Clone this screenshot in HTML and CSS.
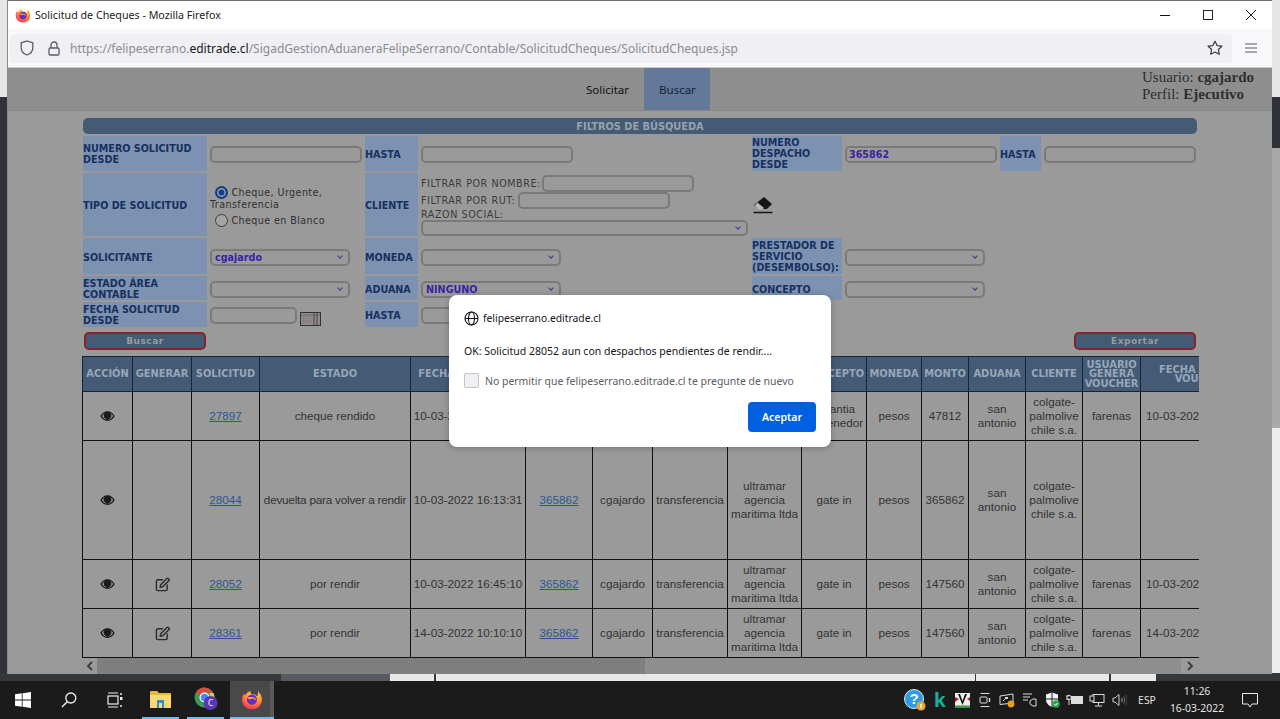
FILE: index.html
```html
<!DOCTYPE html>
<html lang="es">
<head>
  <meta charset="UTF-8">
  <title>Solicitud de Cheques - Mozilla Firefox</title>
  <link rel="stylesheet" href="styles.css">
</head>
<body>
  <svg class="defs" width="0" height="0">
    <defs>
      <radialGradient id="ffBody" cx="0.6" cy="0.25" r="0.95">
        <stop offset="0" stop-color="#ffe14d"/>
        <stop offset="0.4" stop-color="#ff9a2e"/>
        <stop offset="0.75" stop-color="#ff3f4e"/>
        <stop offset="1" stop-color="#d6177a"/>
      </radialGradient>
      <symbol id="firefox" viewBox="0 0 32 32">
        <path fill="url(#ffBody)" d="M24 2c.6 2.6 2 3.500 3.600 6 2 3 2.900 6 2.900 9.200C30.500 25 24 31 16 31S1.500 25 1.500 17c0-3.500 1-6.800 3-9.300 0 1.500.5 2.600 1.500 3.300C7.500 8 10 6 14 4.500c-.7 2 0 3.500 1.500 4.500 3.500-.2 6.300 1 8 3.500C25 9.500 25.300 6 24 2z"/>
        <circle cx="16" cy="17" r="7.500" fill="#6a2bc4"/>
        <path fill="#ff9a2e" d="M9 14c3-1.500 5-1 7-1 4 0 6.500 3 6.500 6-2-3-5-4-8-3-2 .7-4 .3-5.500-2z"/>
      </symbol>
      <symbol id="eye" viewBox="0 0 16 12">
        <path fill="#1c1c1c" d="M8 .8C4.500.8 1.800 3 .3 6c1.500 3 4.200 5.200 7.700 5.200S14.200 9 15.700 6C14.200 3 11.500.8 8 .8zm0 9.200C5.500 10 3.300 8.300 2 6c.8-1.300 1.800-2.400 3.100-3.100A4 4 0 1 0 10.900 2.900C12.200 3.600 13.200 4.700 14 6c-1.300 2.300-3.500 4-6 4z"/>
        <circle cx="8" cy="5.500" r="2.600" fill="#1c1c1c"/>
      </symbol>
      <symbol id="edit" viewBox="0 0 16 16">
        <path fill="none" stroke="#2b2b2b" stroke-width="1.500" d="M8.500 3H3a1.500 1.500 0 0 0-1.500 1.500V13A1.500 1.500 0 0 0 3 14.500h8.500A1.500 1.500 0 0 0 13 13V8"/>
        <path fill="none" stroke="#2b2b2b" stroke-width="1.500" stroke-linejoin="round" d="M5.500 11l.6-2.800L12.700 1.600a1 1 0 0 1 1.400 0l.8.8a1 1 0 0 1 0 1.400L8.300 10.400z"/>
      </symbol>
    </defs>
  </svg>

  <div class="backdrop-top"></div>
  <div class="backdrop-side"></div>
  <div class="backdrop-strip">
    <span class="strip-a"></span>
    <span class="strip-b"></span>
    <span class="strip-c"></span>
    <span class="strip-d"></span>
    <span class="strip-e"></span>
    <span class="strip-f"></span>
  </div>

  <div class="ventana">
    <div class="titulo">
      <svg class="ff-mini" width="16" height="16"><use href="#firefox"/></svg>
      <span class="titulo-txt">Solicitud de Cheques - Mozilla Firefox</span>
      <div class="ctrl">
        <svg width="12" height="12" viewBox="0 0 12 12"><path d="M1 6.500h10" stroke="#111" stroke-width="1"/></svg>
        <svg width="12" height="12" viewBox="0 0 12 12"><rect x="1.500" y="1.500" width="9" height="9" fill="none" stroke="#222"/></svg>
        <svg width="12" height="12" viewBox="0 0 12 12"><path d="M1 1l10 10M11 1L1 11" stroke="#222" stroke-width="1"/></svg>
      </div>
    </div>

    <div class="toolbar">
      <div class="urlbar">
        <svg class="shield" width="14" height="16" viewBox="0 0 14 16"><path d="M7 1l5.800 1.800v5C12.800 11.500 10 14 7 15 4 14 1.200 11.500 1.200 7.800v-5z" fill="none" stroke="#5b5b66" stroke-width="1.300"/></svg>
        <svg class="lock" width="12" height="15" viewBox="0 0 12 15"><path d="M3 7V4a3 3 0 0 1 6 0v3" fill="none" stroke="#5b5b66" stroke-width="1.300"/><rect x="1" y="7" width="10" height="7" rx="1.200" fill="none" stroke="#5b5b66" stroke-width="1.300"/></svg>
        <span class="url">https://felipeserrano.<b>editrade.cl</b>/SigadGestionAduaneraFelipeSerrano/Contable/SolicitudCheques/SolicitudCheques.jsp</span>
        <svg class="star" width="16" height="16" viewBox="0 0 16 16"><path d="M8 1.200l2.100 4.400 4.800.6-3.500 3.300.9 4.800L8 12l-4.300 2.300.9-4.800L1.100 6.200l4.800-.6z" fill="none" stroke="#3a3a44" stroke-width="1.200" stroke-linejoin="round"/></svg>
      </div>
      <svg class="menu" width="12" height="10" viewBox="0 0 12 10"><path d="M0 1h12M0 5h12M0 9h12" stroke="#55555f" stroke-width="1.100"/></svg>
    </div>

    <div class="contenido">
      <div class="nav">
        <a class="tab">Solicitar</a>
        <a class="tab activo">Buscar</a>
        <div class="usuario">Usuario: <b>cgajardo</b><br>Perfil: <b>Ejecutivo</b></div>
      </div>

      <div class="pagina">
        <div class="barra">FILTROS DE BÚSQUEDA</div>

        <div class="filtros">
          <div class="lbl">NUMERO SOLICITUD DESDE</div>
          <div class="campo"><input class="inp w151" type="text"></div>
          <div class="lbl baja">HASTA</div>
          <div class="campo"><input class="inp w151" type="text"></div>
          <div class="lbl">NUMERO DESPACHO DESDE</div>
          <div class="campo"><input class="inp w151 azul" type="text" value="365862"></div>
          <div class="lbl baja">HASTA</div>
          <div class="campo"><input class="inp w151" type="text"></div>

          <div class="lbl baja">TIPO DE SOLICITUD</div>
          <div class="campo tipo">
            <div class="op"><input class="radio" type="radio" name="tipo" checked> Cheque, Urgente, Transferencia</div>
            <div class="op"><input class="radio" type="radio" name="tipo"> Cheque en Blanco</div>
          </div>
          <div class="lbl baja">CLIENTE</div>
          <div class="campo cliente">
            <div class="fila-cli">FILTRAR POR NOMBRE:<input class="inp w151" type="text"></div>
            <div class="fila-cli">FILTRAR POR RUT:<input class="inp w151" type="text"></div>
            <div class="razon">RAZON SOCIAL:</div>
            <div class="sel w327"></div>
          </div>
          <div class="borrar">
            <svg width="21" height="18" viewBox="0 0 21 18"><path d="M12 1l8 7-5 5H7L2 9z" fill="#151515"/><path d="M5.500 6.500L12 12l-2 1.500H6.500L2.800 9.500z" fill="#b8b8b8"/><path d="M1.500 16.500h19" stroke="#151515" stroke-width="1.500"/></svg>
          </div>
          <div class="vacio"></div>
          <div class="vacio"></div>
          <div class="vacio"></div>

          <div class="lbl baja">SOLICITANTE</div>
          <div class="campo"><div class="sel w140 azul">cgajardo</div></div>
          <div class="lbl baja">MONEDA</div>
          <div class="campo"><div class="sel w140"></div></div>
          <div class="lbl">PRESTADOR DE SERVICIO (DESEMBOLSO):</div>
          <div class="campo"><div class="sel w140"></div></div>
          <div class="vacio"></div>
          <div class="vacio"></div>

          <div class="lbl baja">ESTADO ÁREA CONTABLE</div>
          <div class="campo"><div class="sel w140"></div></div>
          <div class="lbl baja">ADUANA</div>
          <div class="campo"><div class="sel w140 azul">NINGUNO</div></div>
          <div class="lbl baja">CONCEPTO</div>
          <div class="campo"><div class="sel w140"></div></div>
          <div class="vacio"></div>
          <div class="vacio"></div>

          <div class="lbl">FECHA SOLICITUD DESDE</div>
          <div class="campo fecha">
            <input class="inp w86" type="text">
            <svg class="cal" width="21" height="14" viewBox="0 0 21 14"><rect x=".5" y=".5" width="20" height="13" fill="#8d8d8d" stroke="#333"/><path d="M1 3h19" stroke="#6d6d6d"/><path d="M3.500 4v8M6 4v8M8.500 4v8M11 4v8" stroke="#94606e" stroke-dasharray="1 1"/><path d="M14 1v12M17 1v12" stroke="#444"/></svg>
          </div>
          <div class="lbl baja">HASTA</div>
          <div class="campo"><input class="inp w86" type="text"></div>
        </div>

        <div class="botones">
          <button class="btn">Buscar</button>
          <button class="btn">Exportar</button>
        </div>

        <div class="tabla-wrap">
          <table class="tabla">
            <colgroup>
              <col class="c50"><col class="c59"><col class="c68"><col class="c151"><col class="c115">
              <col class="c67"><col class="c60"><col class="c75"><col class="c74"><col class="c65">
              <col class="c55"><col class="c47"><col class="c57"><col class="c57"><col class="c58"><col class="c122">
            </colgroup>
            <thead>
              <tr>
                <th>ACCIÓN</th><th>GENERAR</th><th>SOLICITUD</th><th>ESTADO</th><th>FECHA SOLICITUD</th>
                <th>DESPACHO</th><th>USUARIO</th><th>TIPO</th><th>PROVEEDOR</th><th>CONCEPTO</th>
                <th>MONEDA</th><th>MONTO</th><th>ADUANA</th><th>CLIENTE</th><th>USUARIO GENERA VOUCHER</th><th>FECHA GENERA VOUCHER</th>
              </tr>
            </thead>
            <tbody>
              <tr class="r49">
                <td><svg class="ico-eye" width="15" height="12"><use href="#eye"/></svg></td>
                <td></td>
                <td><a class="lnk">27897</a></td>
                <td>cheque rendido</td>
                <td class="nw">10-03-2022 10:12:40</td>
                <td><a class="lnk">365862</a></td>
                <td>cgajardo</td>
                <td>transferencia</td>
                <td>ultramar agencia maritima ltda</td>
                <td>garantia contenedor</td>
                <td>pesos</td>
                <td>47812</td>
                <td>san antonio</td>
                <td>colgate-palmolive chile s.a.</td>
                <td>farenas</td>
                <td class="izq">10-03-2022 11:20:15</td>
              </tr>
              <tr class="r119">
                <td><svg class="ico-eye" width="15" height="12"><use href="#eye"/></svg></td>
                <td></td>
                <td><a class="lnk">28044</a></td>
                <td class="nw ceñido">devuelta para volver a rendir</td>
                <td class="nw">10-03-2022 16:13:31</td>
                <td><a class="lnk">365862</a></td>
                <td>cgajardo</td>
                <td>transferencia</td>
                <td>ultramar agencia maritima ltda</td>
                <td>gate in</td>
                <td>pesos</td>
                <td>365862</td>
                <td>san antonio</td>
                <td>colgate-palmolive chile s.a.</td>
                <td></td>
                <td></td>
              </tr>
              <tr class="r49">
                <td><svg class="ico-eye" width="15" height="12"><use href="#eye"/></svg></td>
                <td><svg class="ico-edit" width="15" height="15"><use href="#edit"/></svg></td>
                <td><a class="lnk">28052</a></td>
                <td>por rendir</td>
                <td class="nw">10-03-2022 16:45:10</td>
                <td><a class="lnk">365862</a></td>
                <td>cgajardo</td>
                <td>transferencia</td>
                <td>ultramar agencia maritima ltda</td>
                <td>gate in</td>
                <td>pesos</td>
                <td>147560</td>
                <td>san antonio</td>
                <td>colgate-palmolive chile s.a.</td>
                <td>farenas</td>
                <td class="izq">10-03-2022 17:02:44</td>
              </tr>
              <tr class="r49">
                <td><svg class="ico-eye" width="15" height="12"><use href="#eye"/></svg></td>
                <td><svg class="ico-edit" width="15" height="15"><use href="#edit"/></svg></td>
                <td><a class="lnk">28361</a></td>
                <td>por rendir</td>
                <td class="nw">14-03-2022 10:10:10</td>
                <td><a class="lnk">365862</a></td>
                <td>cgajardo</td>
                <td>transferencia</td>
                <td>ultramar agencia maritima ltda</td>
                <td>gate in</td>
                <td>pesos</td>
                <td>147560</td>
                <td>san antonio</td>
                <td>colgate-palmolive chile s.a.</td>
                <td>farenas</td>
                <td class="izq">14-03-2022 10:30:02</td>
              </tr>
            </tbody>
          </table>
        </div>

        <div class="scroll-h">
          <span class="flecha"><svg width="8" height="10" viewBox="0 0 8 10"><path d="M6 1L2 5l4 4" fill="none" stroke="#3e3e3e" stroke-width="2"/></svg></span>
          <span class="thumb"></span>
          <span class="flecha der"><svg width="8" height="10" viewBox="0 0 8 10"><path d="M2 1l4 4-4 4" fill="none" stroke="#3e3e3e" stroke-width="2"/></svg></span>
        </div>
      </div>

      <div class="dialogo">
        <div class="dlg-host">
          <svg width="15" height="15" viewBox="0 0 15 15"><g fill="none" stroke="#15141a" stroke-width="1.100"><circle cx="7.500" cy="7.500" r="6.500"/><ellipse cx="7.500" cy="7.500" rx="3" ry="6.500"/><path d="M1 7.500h13"/></g></svg>
          felipeserrano.editrade.cl
        </div>
        <div class="dlg-msg">OK: Solicitud 28052 aun con despachos pendientes de rendir....</div>
        <div class="dlg-check"><span class="caja"></span>No permitir que felipeserrano.editrade.cl te pregunte de nuevo</div>
        <div class="dlg-pie"><button class="aceptar">Aceptar</button></div>
      </div>
    </div>
  </div>

  <div class="taskbar">
    <div class="tb-btn">
      <svg width="16" height="16" viewBox="0 0 16 16"><path fill="#fff" d="M0 2.300L6.800 1.300V7.600H0zM7.600 1.200L16 0V7.600H7.600zM0 8.400H6.800V14.700L0 13.700zM7.600 8.400H16V16L7.600 14.800z"/></svg>
    </div>
    <div class="tb-btn">
      <svg width="16" height="16" viewBox="0 0 16 16"><circle cx="9.800" cy="6" r="5" fill="none" stroke="#eee" stroke-width="1.300"/><path d="M6.200 9.800L1 15" stroke="#eee" stroke-width="1.500"/></svg>
    </div>
    <div class="tb-btn">
      <svg width="16" height="16" viewBox="0 0 16 16"><path fill="none" stroke="#eee" stroke-width="1.200" d="M1 1h10M1 15h10"/><rect x="1" y="4" width="10" height="8" fill="none" stroke="#eee" stroke-width="1.200"/><path d="M14 1v2M14 13v2" stroke="#eee" stroke-width="1.500"/><rect x="13" y="5" width="2.500" height="3" fill="#eee"/></svg>
    </div>
    <div class="tb-app folder">
      <svg width="21" height="18" viewBox="0 0 21 18"><path fill="#e8b545" d="M0 2a1 1 0 0 1 1-1h6l2 2h11a1 1 0 0 1 1 1v13a1 1 0 0 1-1 1H1a1 1 0 0 1-1-1z"/><path fill="#fbd971" d="M0 5h21v12a1 1 0 0 1-1 1H1a1 1 0 0 1-1-1z"/><path fill="#2c8fd6" d="M7 10h7v8h-2v-5h-3v5H7z"/></svg>
    </div>
    <div class="tb-app chrome">
      <svg width="24" height="24" viewBox="0 0 24 24">
        <circle cx="10.500" cy="10.500" r="10" fill="#3a9b52"/>
        <path fill="#dd4b3e" d="M2 5a10 10 0 0 1 17 .5H10.500A5 5 0 0 0 5.800 9z"/>
        <path fill="#f6c33b" d="M19.400 6a10 10 0 0 1-9 14.500l4.400-7.500a5 5 0 0 0 .2-7z"/>
        <circle cx="10.500" cy="10.500" r="5" fill="#fff"/>
        <circle cx="10.500" cy="10.500" r="3.800" fill="#4a8af0"/>
        <circle cx="16.500" cy="16" r="7" fill="#5a37b8"/>
        <text class="badge-c" x="16.500" y="19">C</text>
      </svg>
    </div>
    <div class="tb-app fox">
      <svg width="22" height="22"><use href="#firefox"/></svg>
    </div>

    <div class="tray">
      <span class="ti ayuda">
        <svg width="22" height="22" viewBox="0 0 22 22"><circle cx="10" cy="10" r="9.500" fill="#2f9be6" stroke="#d9eefb"/><text class="q" x="10" y="15">?</text><circle cx="17" cy="17" r="4.500" fill="#e5a93a"/><path d="M17 15v4" stroke="#fff" stroke-width="1.300"/></svg>
      </span>
      <span class="ti k">k</span>
      <span class="ti">
        <svg width="15" height="15" viewBox="0 0 15 15"><rect width="15" height="15" fill="#eee"/><path d="M3 1l4.500 11L12 1h-2L7.500 8 5 1z" fill="#111"/><path d="M0 4l4 2-4 3zM15 4l-3 2 3 2z" fill="#b3202a"/><rect y="12.500" width="15" height="2.500" fill="#3f9447"/></svg>
      </span>
      <span class="ti">
        <svg width="12" height="16" viewBox="0 0 12 16"><path d="M2 1.500h8M2 14.500h8" stroke="#ddd" stroke-linecap="round"/><rect x="1" y="5" width="7" height="6" rx="1" fill="none" stroke="#ddd"/><path d="M10.500 6v4" stroke="#ddd" stroke-width="1.400"/></svg>
      </span>
      <span class="ti">
        <svg width="16" height="16" viewBox="0 0 16 16"><path d="M1 4l13-2v9l-13 1.500z" fill="none" stroke="#ddd"/><path d="M4 9l3-3" stroke="#ddd"/><rect x="6" y="5" width="3" height="2" fill="#ddd"/><circle cx="12" cy="12" r="3.400" fill="#f29a22"/></svg>
      </span>
      <span class="ti">
        <svg width="16" height="15" viewBox="0 0 16 15"><path d="M1 1h9M1 4h7M1 7h5" stroke="#ddd"/><path d="M8 8l3-2h3v7h-3l-3-2z" fill="none" stroke="#ddd"/></svg>
      </span>
      <span class="ti">
        <svg width="15" height="16" viewBox="0 0 15 16"><path d="M7 .5l6 2v5c0 3.500-2.500 6-6 7.500-3.500-1.500-6-4-6-7.500v-5z" fill="#f2f2f2"/><path d="M7 .5v15M1 7h12" stroke="#1b1b1b"/><circle cx="11" cy="12" r="3.800" fill="#2ea44f"/><path d="M9.300 12l1.300 1.300 2-2.300" fill="none" stroke="#fff"/></svg>
      </span>
      <span class="ti">
        <svg width="18" height="12" viewBox="0 0 18 12"><rect x="5" y="2" width="12" height="8" fill="#ddd"/><path d="M0 2h3M0 5h3" stroke="#ddd"/><circle cx="3" cy="3.500" r="2.200" fill="none" stroke="#ddd"/><path d="M3 6v5" stroke="#ddd"/></svg>
      </span>
      <span class="ti">
        <svg width="16" height="15" viewBox="0 0 16 15"><rect x="4" y="1.500" width="11" height="8" fill="none" stroke="#ddd"/><rect x="1" y="3" width="4" height="5" fill="#1b1b1b" stroke="#ddd"/><path d="M9.500 9.500v3M6 13h7" stroke="#ddd"/></svg>
      </span>
      <span class="ti">
        <svg width="15" height="14" viewBox="0 0 15 14"><path d="M1 5h2l4-3.500v11L3 9H1z" fill="none" stroke="#ccc"/><path d="M9.500 5c.8 1 .8 3 0 4" fill="none" stroke="#aaa"/><path d="M11.500 3.500c1.400 2 1.400 5 0 7" fill="none" stroke="#777"/><path d="M13.500 2c2 3 2 7 0 10" fill="none" stroke="#555"/></svg>
      </span>
      <span class="idioma">ESP</span>
      <div class="reloj">11:26<br>16-03-2022</div>
      <span class="notif">
        <svg width="16" height="15" viewBox="0 0 16 15"><path d="M.5.500h15v10.500h-5.500L8 14l-2-3H.5z" fill="none" stroke="#eee"/></svg>
      </span>
    </div>
  </div>
</body>
</html>
```

FILE: styles.css
```css
html, body {
  margin: 0;
  padding: 0;
}

body {
  width: 1280px;
  height: 719px;
  overflow: hidden;
  position: relative;
  background-color: #2f3337;
  font-family: "Liberation Sans", Arial, sans-serif;
}

.defs {
  position: absolute;
}

/* lo que se ve detras de la ventana */
.backdrop-top {
  position: absolute;
  left: 0;
  top: 0;
  width: 1280px;
  height: 97px;
  background-color: #e6e6e6;
}

.backdrop-side {
  position: absolute;
  left: 1272px;
  top: 148px;
  width: 8px;
  height: 525px;
  background: linear-gradient(#a9a9a9 0, #a9a9a9 280px, #ececec 280px);
}

.backdrop-strip {
  position: absolute;
  left: 0;
  top: 673px;
  width: 1280px;
  height: 8px;
  display: flex;
  background-color: #33383c;
}

.strip-a { width: 281px; }
.strip-b { width: 109px; background-color: #565b61; }
.strip-c { width: 44px; background-color: #e8e8e8; margin-right: 2px; }
.strip-d { width: 539px; background-color: #e8e8e8; margin-right: 1px; }
.strip-e { width: 133px; background-color: #e8e8e8; margin-right: 2px; }
.strip-f { width: 45px; background-color: #e8e8e8; }

/* ventana firefox */
.ventana {
  position: absolute;
  left: 7px;
  top: 0;
  width: 1265px;
  height: 674px;
  background-color: #fff;
  border-top: 1px solid #6e6e6e;
  border-left: 1px solid #8a8a8a;
  box-sizing: border-box;
  overflow: hidden;
}

.titulo {
  height: 28px;
  display: flex;
  align-items: center;
  padding-left: 7px;
}

.ff-mini {
  margin-right: 4px;
}

.titulo-txt {
  font-family: "Noto Sans", sans-serif;
  font-size: 10.7px;
  color: #222;
}

.ctrl {
  margin-left: auto;
  display: flex;
  gap: 31px;
  padding-right: 15px;
}

.toolbar {
  height: 39px;
  background-color: #f9f9fb;
  display: flex;
  align-items: center;
  box-sizing: border-box;
  border-bottom: 1px solid #c8c8c8;
}

.urlbar {
  margin-left: 2px;
  width: 1222px;
  height: 29px;
  background-color: #f0f0f4;
  border-radius: 4px;
  display: flex;
  align-items: center;
  padding-left: 10px;
  box-sizing: border-box;
}

.lock {
  margin-left: 14px;
}

.url {
  margin-left: 10px;
  font-family: "Noto Sans", sans-serif;
  font-size: 12px;
  color: #8b8b92;
  white-space: nowrap;
}

.url b {
  font-weight: 400;
  color: #15141a;
}

.star {
  margin-left: auto;
  margin-right: 9px;
}

.menu {
  margin-left: 13px;
}

/* contenido atenuado */
.contenido {
  position: relative;
  height: 606px;
  background-color: #9a9a9a;
}

.nav {
  height: 42px;
  background-color: #8e8e8e;
  border-bottom: 1px solid #858585;
  display: flex;
  justify-content: flex-start;
  padding-left: 563px;
  position: relative;
  font-family: "Noto Sans", sans-serif;
  font-size: 11.5px;
  color: #111;
}

.tab {
  display: flex;
  align-items: center;
  padding: 0 15px;
}

.tab.activo {
  padding: 0 14px 0 15px;
  background-color: #64799a;
  color: #14233a;
}

.usuario {
  position: absolute;
  left: 1134px;
  top: 1px;
  font-family: "Liberation Serif", serif;
  font-size: 15px;
  line-height: 17px;
  color: #2f2f2f;
}

.pagina {
  padding: 7px 0 0 75px;
}

.barra {
  width: 1114px;
  height: 16px;
  background-color: #445a75;
  border-radius: 5px;
  text-align: center;
  font-family: "DejaVu Sans", sans-serif;
  font-weight: 700;
  font-size: 9.8px;
  line-height: 17px;
  color: #98a3ae;
}

.filtros {
  margin-top: 2px;
  width: 1114px;
  display: grid;
  grid-template-columns: 124px 158px 53px 334px 90px 158px 41px 156px;
  grid-template-rows: 35px 63px 36px 24px 25px;
  row-gap: 2px;
  font-family: "DejaVu Sans", sans-serif;
  font-size: 9.6px;
  color: #303030;
}

.lbl {
  background-color: #7d92b0;
  color: #17305f;
  font-weight: 700;
  font-size: 9.6px;
  line-height: 11px;
  display: flex;
  align-items: center;
}

.lbl.baja {
  padding-top: 2px;
}

.campo {
  padding: 2px 0 0 3px;
  display: flex;
  align-items: center;
}

.inp {
  box-sizing: border-box;
  height: 17px;
  padding: 0 2px;
  border: 2px solid #7a7a7a;
  border-radius: 5px;
  background-color: #9a9a9a;
  font-family: "DejaVu Sans", sans-serif;
  font-size: 9.6px;
  outline: none;
}

.w151 { width: 152px; }
.w86 { width: 87px; }

.azul {
  color: #3a1fa8;
  font-weight: 700;
}

.sel {
  box-sizing: border-box;
  position: relative;
  height: 17px;
  line-height: 13px;
  padding-left: 3px;
  border: 2px solid #7a7a7a;
  border-radius: 5px;
  background-color: #9a9a9a;
}

.sel::after {
  content: "";
  position: absolute;
  right: 6px;
  top: 3px;
  width: 3px;
  height: 3px;
  border-right: 1.5px solid #3f3a9a;
  border-bottom: 1.5px solid #3f3a9a;
  transform: rotate(45deg);
}

.w140 { width: 140px; }
.w327 { width: 327px; }

.tipo {
  flex-direction: column;
  align-items: flex-start;
  justify-content: flex-start;
  padding-top: 13px;
  line-height: 11px;
  letter-spacing: 0.4px;
}

.op {
  margin-bottom: 4px;
}

.radio {
  appearance: none;
  box-sizing: border-box;
  width: 13px;
  height: 13px;
  margin: 0 0 0 5px;
  vertical-align: -3px;
  border: 1.5px solid #3d3d3d;
  border-radius: 50%;
  background-color: #a5a5a5;
}

.radio:checked {
  border: 2px solid #123f8c;
  background-color: #123f8c;
  box-shadow: inset 0 0 0 1.5px #a5a5a5;
}

.cliente {
  flex-direction: column;
  align-items: flex-start;
  justify-content: flex-start;
  padding-top: 2px;
  box-sizing: border-box;
  letter-spacing: 0.55px;
}

.fila-cli {
  height: 17px;
  display: flex;
  align-items: center;
  white-space: nowrap;
  color: #3a3a3a;
}

.fila-cli .inp {
  margin-left: 1px;
}

.fila-cli + .fila-cli .inp {
  margin-left: 3px;
}

.razon {
  line-height: 11px;
  color: #3a3a3a;
}

.borrar {
  display: flex;
  align-items: center;
}

.fecha {
  gap: 3px;
}

.cal {
  margin-top: 6px;
}

.botones {
  width: 1112px;
  margin: 5px 0 0 1px;
  display: flex;
  justify-content: space-between;
}

.btn {
  box-sizing: border-box;
  width: 122px;
  height: 18px;
  padding: 0;
  background-color: #445a75;
  border: 2px solid #8a1f30;
  border-radius: 5px;
  font-family: "DejaVu Sans", sans-serif;
  font-weight: 700;
  font-size: 9px;
  letter-spacing: 0.5px;
  color: #9a9a9a;
}

/* tabla */
.tabla-wrap {
  margin: 6px 0 0 -1px;
  width: 1117px;
  overflow: hidden;
}

.tabla {
  border-collapse: collapse;
  table-layout: fixed;
  width: 1175px;
  font-size: 11.7px;
  line-height: 14px;
  color: #333;
}

.c50 { width: 50px; }
.c59 { width: 59px; }
.c68 { width: 68px; }
.c151 { width: 151px; }
.c115 { width: 115px; }
.c67 { width: 67px; }
.c60 { width: 60px; }
.c75 { width: 75px; }
.c74 { width: 74px; }
.c65 { width: 65px; }
.c55 { width: 55px; }
.c47 { width: 47px; }
.c57 { width: 57px; }
.c58 { width: 58px; }
.c122 { width: 122px; }

.tabla th {
  height: 34px;
  padding: 0;
  background-color: #445a75;
  border: 1px solid #16263a;
  font-family: "DejaVu Sans", sans-serif;
  font-weight: 700;
  font-size: 9.9px;
  line-height: 9.5px;
  color: #97a7b8;
}

.tabla td {
  padding: 0 1px;
  border: 1px solid #111;
  text-align: center;
  vertical-align: middle;
}

.r49 { height: 49px; }
.r119 { height: 119px; }

.tabla td.izq {
  text-align: left;
  padding-left: 5px;
  white-space: nowrap;
  overflow: hidden;
}

.tabla td.nw {
  white-space: nowrap;
  overflow: hidden;
}

.tabla td.ceñido {
  letter-spacing: -0.2px;
}

.lnk {
  color: #2c5690;
  text-decoration: underline;
}

.ico-eye,
.ico-edit {
  display: block;
  margin: 0 auto;
}

.scroll-h {
  margin: 0 0 0 -1px;
  width: 1117px;
  height: 16px;
  display: flex;
  background-color: #8e8e8e;
  align-items: stretch;
}

.flecha {
  width: 15px;
  background-color: #9a9a9a;
  display: flex;
  align-items: center;
  justify-content: center;
}

.flecha.der {
  margin-left: auto;
  width: 18px;
}

.thumb {
  width: 548px;
  background-color: #7f7f7f;
}

/* aviso del navegador */
.dialogo {
  position: absolute;
  left: 441px;
  top: 227px;
  width: 382px;
  height: 152px;
  box-sizing: border-box;
  padding: 15px 15px 0;
  background-color: #fff;
  border-radius: 8px;
  box-shadow: 0 1px 6px rgba(0,0,0,0.25);
  font-family: "Noto Sans", sans-serif;
  font-size: 10.45px;
  color: #15141a;
}

.dlg-host {
  display: flex;
  align-items: center;
  gap: 4px;
  height: 16px;
  font-size: 10.3px;
}

.dlg-msg {
  margin-top: 17px;
  font-size: 10.5px;
  line-height: 16px;
  white-space: nowrap;
}

.dlg-check {
  margin-top: 14px;
  display: flex;
  align-items: center;
  height: 15px;
  color: #5b5b66;
  white-space: nowrap;
}

.caja {
  box-sizing: border-box;
  width: 15px;
  height: 15px;
  margin-right: 6px;
  background-color: #f0f0f4;
  border: 1px solid #c4c4c8;
  border-radius: 2px;
}

.dlg-pie {
  margin-top: 14px;
  display: flex;
  justify-content: flex-end;
}

.aceptar {
  width: 68px;
  height: 30px;
  padding: 0;
  border: 0;
  border-radius: 4px;
  background-color: #0060df;
  color: #fff;
  font-family: "Noto Sans", sans-serif;
  font-size: 10.5px;
  font-weight: 600;
}

/* barra de tareas */
.taskbar {
  position: absolute;
  left: 0;
  top: 681px;
  width: 1280px;
  height: 38px;
  background-color: #1b1b1b;
  display: flex;
}

.tb-btn {
  width: 46px;
  display: flex;
  align-items: center;
  justify-content: center;
}

.tb-app {
  box-sizing: border-box;
  display: flex;
  align-items: center;
  justify-content: center;
  border-bottom: 2px solid #76b9ed;
}

.folder {
  width: 37px;
  margin-left: 4px;
}

.chrome {
  width: 37px;
  margin-left: 8px;
}

.fox {
  width: 44px;
  margin-left: 6px;
  background: linear-gradient(90deg, #494949 0, #494949 40px, #5a5a5a 40px);
}

.badge-c {
  font-family: "Noto Sans", sans-serif;
  font-size: 8px;
  fill: #fff;
  text-anchor: middle;
}

.tray {
  margin-left: auto;
  display: flex;
  align-items: center;
  color: #e4e4e4;
  font-family: "Noto Sans", sans-serif;
  font-size: 10.4px;
}

.ti {
  width: 22.500px;
  display: flex;
  align-items: center;
  justify-content: center;
}

.ayuda {
  margin-right: 2px;
}

.q {
  font-family: "Liberation Sans", sans-serif;
  font-size: 15px;
  font-weight: 700;
  fill: #fff;
  text-anchor: middle;
}

.k {
  font-family: "Liberation Sans", sans-serif;
  font-size: 21px;
  font-weight: 700;
  line-height: 22px;
  color: #16b39b;
}

.idioma {
  width: 24px;
  margin-left: 4px;
  text-align: center;
}

.reloj {
  width: 62px;
  margin-left: 7px;
  text-align: center;
  line-height: 17px;
}

.notif {
  margin-left: 14px;
  margin-right: 22px;
  display: flex;
}
```
